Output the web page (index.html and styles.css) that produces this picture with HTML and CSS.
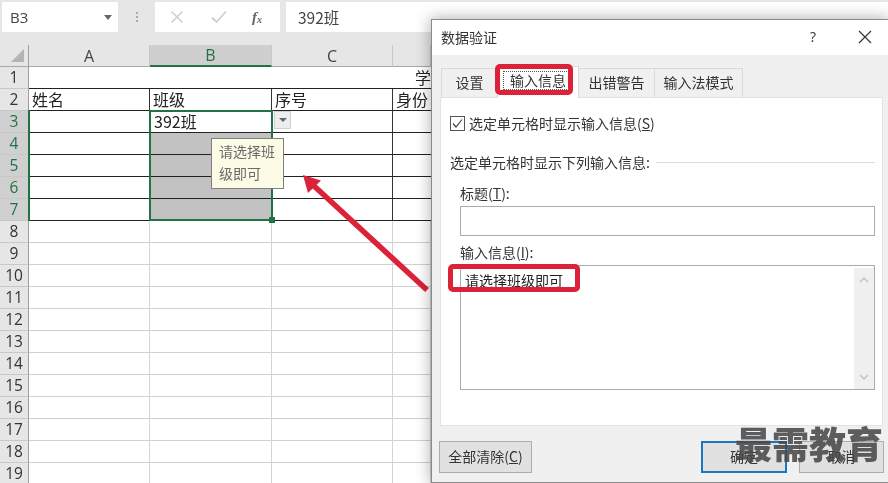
FILE: index.html
```html
<!DOCTYPE html>
<html lang="zh-CN">
<head>
<meta charset="utf-8">
<title>数据验证</title>
<link rel="stylesheet" href="styles.css">
</head>
<body>
<div class="app">
  <div class="formula-bar">
    <div class="box name-box"><span>B3</span><i class="tri"></i></div>
    <div class="grip"><b></b><b></b><b></b></div>
    <div class="box fx-box">
      <svg class="ic" width="14" height="14" viewBox="0 0 14 14"><path d="M1.500 1.500L12.500 12.500M12.500 1.500L1.500 12.500" stroke="#cfcfcf" stroke-width="1.600" fill="none"/></svg>
      <svg class="ic" width="16" height="14" viewBox="0 0 16 14"><path d="M1 7.500L5.500 12L15 1.500" stroke="#cfcfcf" stroke-width="1.800" fill="none"/></svg>
      <span class="fx">f<sub>x</sub></span>
    </div>
    <div class="box formula-input">392班</div>
  </div>
  <div class="sheet">
    <table class="grid">
      <colgroup><col class="c0"><col class="c1"><col class="c2"><col class="c3"><col class="c4"></colgroup>
      <thead>
        <tr><th class="corner"><i></i></th><th>A</th><th class="sel-col">B</th><th>C</th><th></th></tr>
      </thead>
      <tbody>
        <tr class="merged"><th>1</th><td colspan="4" class="title">学</td></tr>
        <tr class="ruled"><th>2</th><td>姓名</td><td>班级</td><td>序号</td><td>身份</td></tr>
        <tr class="ruled"><th class="sel-row">3</th><td></td><td class="active-cell">392班</td><td></td><td></td></tr>
        <tr class="ruled"><th class="sel-row">4</th><td></td><td class="gray"></td><td></td><td></td></tr>
        <tr class="ruled"><th class="sel-row">5</th><td></td><td class="gray"></td><td></td><td></td></tr>
        <tr class="ruled"><th class="sel-row">6</th><td></td><td class="gray"></td><td></td><td></td></tr>
        <tr class="ruled"><th class="sel-row">7</th><td></td><td class="gray"></td><td></td><td></td></tr>
        <tr><th>8</th><td></td><td></td><td></td><td></td></tr>
        <tr><th>9</th><td></td><td></td><td></td><td></td></tr>
        <tr><th>10</th><td></td><td></td><td></td><td></td></tr>
        <tr><th>11</th><td></td><td></td><td></td><td></td></tr>
        <tr><th>12</th><td></td><td></td><td></td><td></td></tr>
        <tr><th>13</th><td></td><td></td><td></td><td></td></tr>
        <tr><th>14</th><td></td><td></td><td></td><td></td></tr>
        <tr><th>15</th><td></td><td></td><td></td><td></td></tr>
        <tr><th>16</th><td></td><td></td><td></td><td></td></tr>
        <tr><th>17</th><td></td><td></td><td></td><td></td></tr>
        <tr><th>18</th><td></td><td></td><td></td><td></td></tr>
        <tr><th>19</th><td></td><td></td><td></td><td></td></tr>
      </tbody>
    </table>
    <div class="row-sel"></div>
    <div class="selection"><i class="handle"></i></div>
    <div class="dd-btn"><i class="tri small"></i></div>
    <div class="tooltip">请选择班<br>级即可</div>
  </div>
  <svg class="arrow" width="888" height="483" viewBox="0 0 888 483"><path d="M427 290L313 185" stroke="#dc2238" stroke-width="5.500" fill="none"/><path d="M303 175L321 180.500L308 193Z" fill="#dc2238"/></svg>

  <section class="dialog">
    <header class="dlg-title"><span>数据验证</span><span class="help">?</span>
      <svg class="close" width="14" height="14" viewBox="0 0 14 14"><path d="M1 1L13 13M13 1L1 13" stroke="#333" stroke-width="1.200" fill="none"/></svg>
    </header>
    <div class="dlg-body">
      <nav class="tabs">
        <span class="tab t1">设置</span>
        <span class="tab t2 active"><span class="focus">输入信息</span></span>
        <span class="tab t3">出错警告</span>
        <span class="tab t4">输入法模式</span>
      </nav>
      <div class="panel">
        <label class="check">
          <svg width="15" height="15" viewBox="0 0 15 15"><rect x=".5" y=".5" width="14" height="14" fill="#fff" stroke="#555"/><path d="M3 7.500L6 11L12 3.500" stroke="#444" stroke-width="1.200" fill="none"/></svg>
          <span>选定单元格时显示输入信息(<u>S</u>)</span>
        </label>
        <div class="group"><span>选定单元格时显示下列输入信息:</span><i></i></div>
        <div class="field-label l1">标题(<u>T</u>):</div>
        <div class="input"></div>
        <div class="field-label l2">输入信息(<u>I</u>):</div>
        <div class="textarea">
          <span class="msg">请选择班级即可</span>
          <div class="scroll">
            <svg width="10" height="6" viewBox="0 0 10 6"><path d="M1 5L5 1L9 5" stroke="#c4c4c4" stroke-width="1.500" fill="none"/></svg>
            <svg width="10" height="6" viewBox="0 0 10 6"><path d="M1 1L5 5L9 1" stroke="#c4c4c4" stroke-width="1.500" fill="none"/></svg>
          </div>
        </div>
      </div>
      <footer class="buttons">
        <button class="btn clear">全部清除(<u>C</u>)</button>
        <button class="btn ok">确定</button>
        <button class="btn cancel">取消</button>
      </footer>
    </div>
  </section>
  <div class="red-box tab-mark"></div>
  <div class="red-box msg-mark"></div>
  <div class="watermark">最需教育</div>
</div>
</body>
</html>
```
FILE: styles.css
```css
* { box-sizing: border-box; }
html, body { margin: 0; padding: 0; height: 100%; background: #fff; }
body { overflow: hidden; }
.app {
  position: relative;
  width: 888px;
  height: 483px;
  overflow: hidden;
  background: #fff;
  color: #222;
  font-family: "Noto Sans CJK SC", "Open Sans", sans-serif;
  filter: blur(.35px);
}
.formula-bar {
  display: flex;
  align-items: flex-start;
  height: 45px;
  padding: 2px 0 0 2px;
  background: #e6e6e6;
}
.box {
  display: flex;
  align-items: center;
  height: 30px;
  background: #fff;
  font-size: 15px;
  color: #444;
}
.name-box { width: 116px; padding: 0 6px 0 8px; justify-content: space-between; font-family: "Open Sans", sans-serif; }
.tri {
  width: 0; height: 0;
  border-left: 4px solid transparent;
  border-right: 4px solid transparent;
  border-top: 5px solid #666;
}
.tri.small { border-left-width: 4px; border-right-width: 4px; border-top-width: 4px; }
.grip { width: 37px; height: 30px; display: flex; flex-direction: column; align-items: center; justify-content: center; gap: 2px; }
.grip b { width: 2px; height: 2px; background: #aaa; }
.fx-box { width: 125px; padding-left: 15px; gap: 27px; margin-right: 6px; }
.ic { flex: none; }
.fx { font: italic 700 15px "Liberation Serif", serif; color: #666; margin-left: -2px; }
.fx sub { font-size: 10px; vertical-align: -1px; }
.formula-input { flex: 1; padding-left: 12px; font-size: 15.500px; }

.sheet { position: relative; }
.grid {
  table-layout: fixed;
  border-collapse: separate;
  border-spacing: 0;
  width: 431px;
}
.c0 { width: 29px; }
.c1 { width: 121px; }
.c2 { width: 122px; }
.c3 { width: 121px; }
.c4 { width: 38px; }
.grid th {
  height: 22px;
  padding: 0;
  font: 400 15.500px/21px "Open Sans", sans-serif;
  color: #333;
  background: #e6e6e6;
  border-right: 1px solid #9e9e9e;
  border-bottom: 1px solid #c8c8c8;
  text-align: center;
}
.grid thead th {
  height: 21px;
  padding: 0;
  font-size: 16px;
  line-height: 20px;
  background: #e6e6e6;
  border-right: 1px solid #c8c8c8;
  border-bottom: 1px solid #a8a8a8;
  color: #444;
}
.grid thead th:first-child { border-right-color: #9e9e9e; }
.corner { position: relative; }
.corner i {
  position: absolute; right: 4px; bottom: 4px;
  width: 0; height: 0;
  border-left: 13px solid transparent;
  border-bottom: 13px solid #b4b4b4;
}
.grid thead th.sel-col { background: #cfcfcf; color: #217346; border-bottom: 2px solid #217346; }
.grid tbody th.sel-row { background: #d0d0d0; color: #217346; }
.grid td {
  height: 22px;
  padding: 0 0 0 3px;
  font-size: 16px;
  line-height: 21px;
  color: #222;
  white-space: nowrap;
  border-right: 1px solid #d4d4d4;
  border-bottom: 1px solid #d0d0d0;
}
.merged td { border-bottom-color: #222; }
.merged td.title { text-align: right; border-right: 0; padding: 0; }
.ruled td { border-right-color: #333; border-bottom-color: #222; }
.ruled td:last-child { border-right: 0; }
.ruled td.gray { background: #c2c2c2; }
.ruled td.active-cell { padding-left: 4px; }

.row-sel { position: absolute; left: 28px; top: 65px; width: 2px; height: 111px; background: #217346; }
.selection { position: absolute; left: 149px; top: 65px; width: 124px; height: 111px; border: 2px solid #217346; pointer-events: none; }
.handle { position: absolute; right: -4px; bottom: -4px; width: 6px; height: 6px; background: #217346; border: 0; }
.dd-btn {
  position: absolute; left: 274px; top: 66px; width: 17px; height: 18px;
  display: flex; align-items: center; justify-content: center;
  background: #ededed; border: 1px solid #cfcfcf;
}
.tooltip {
  position: absolute; left: 211px; top: 93px; width: 73px; height: 51px;
  padding: 1px 0 0 7px;
  background: #fbfbe6;
  border: 1px solid #7f7f7f;
  font-size: 14px;
  line-height: 22px;
  color: #6a6a6a;
  white-space: nowrap;
}
.arrow { position: absolute; left: 0; top: 0; }

.dialog {
  position: absolute;
  left: 431px; top: 19px;
  width: 457px; height: 464px;
  display: flex; flex-direction: column;
  background: #f0f0f0;
  border: 1px solid #8a8a8a;
  border-right: 0;
  box-shadow: 0 0 14px 1px rgba(0,0,0,.3);
  font-size: 14px;
  line-height: 20px;
  color: #333;
}
.dlg-title {
  display: flex; align-items: center;
  height: 35px; flex: none;
  padding: 0 0 1px 9px;
  background: #fff;
}
.help { margin-left: auto; margin-right: 42px; font-family: "Open Sans", sans-serif; font-size: 14px; }
.close { margin-right: 16px; }
.dlg-body { flex: 1; display: flex; flex-direction: column; padding: 0 5px 0 8px; }
.tabs { display: flex; align-items: flex-end; height: 42px; flex: none; padding-left: 1px; }
.tab {
  height: 29px;
  display: flex; align-items: center; justify-content: center;
  padding-bottom: 3px;
  background: #f0f0f0;
  border: 1px solid #dadada;
  border-bottom: 0;
  border-right: 0;
  white-space: nowrap;
}
.t1 { width: 56px; }
.t2 { width: 82px; height: 32px; background: #fff; border-right: 1px solid #dadada; margin-bottom: -1px; padding: 0 0 4px; position: relative; }
.t3 { width: 75px; border-left: 0; }
.t4 { width: 89px; border-right: 1px solid #dadada; }
.focus { border: 1px dotted #555; padding: 0 6px; line-height: 17px; }
.panel {
  height: 329px; flex: none;
  background: #fff;
  border: 1px solid #e2e2e2;
  display: flex; flex-direction: column;
  padding: 15px 7px 0 9px;
}
.check { display: flex; align-items: center; gap: 4px; height: 20px; }
.check svg { flex: none; }
.group { display: flex; align-items: center; gap: 6px; margin-top: 19px; height: 20px; }
.group i { flex: 1; height: 1px; background: #dcdcdc; margin-right: 0; }
.field-label { margin-left: 10px; height: 20px; }
.l1 { margin-top: 11px; }
.l2 { margin-top: 6px; }
.input { margin-left: 10px; height: 30px; border: 1px solid #ababab; flex: none; margin-top: 3px; }
.textarea {
  position: relative;
  margin-left: 10px; margin-top: 3px;
  height: 125px; flex: none;
  border: 1px solid #ababab;
  padding: 4px 0 0 4px;
  color: #222;
}
.scroll {
  position: absolute; right: 0; top: 2px; bottom: 0; width: 20px;
  background: #f0f0f0;
  display: flex; flex-direction: column; align-items: center; justify-content: space-between;
  padding: 9px 0 9px;
}
.scroll svg { flex: none; }
.buttons { display: flex; margin-top: 15px; }
.btn {
  height: 32px;
  padding: 0 0 2px;
  background: #e1e1e1;
  border: 1px solid #adadad;
  font: inherit;
  color: #333;
}
.clear { width: 93px; margin-left: -1px; }
.ok { width: 86px; margin-left: auto; border: 2px solid #1a78c2; }
.cancel { width: 85px; margin-left: 12px; margin-right: -1px; }

.red-box { position: absolute; z-index: 2; border: 5px solid #dc2238; border-radius: 5px; }
.tab-mark { left: 495px; top: 64px; width: 78px; height: 31px; }
.msg-mark { left: 448px; top: 264px; width: 132px; height: 28px; }
.watermark {
  position: absolute; z-index: 2; left: 735px; top: 419px;
  font-size: 37px; line-height: 48px; font-weight: 900;
  color: rgba(72,72,72,.88);
  white-space: nowrap;
}
```
